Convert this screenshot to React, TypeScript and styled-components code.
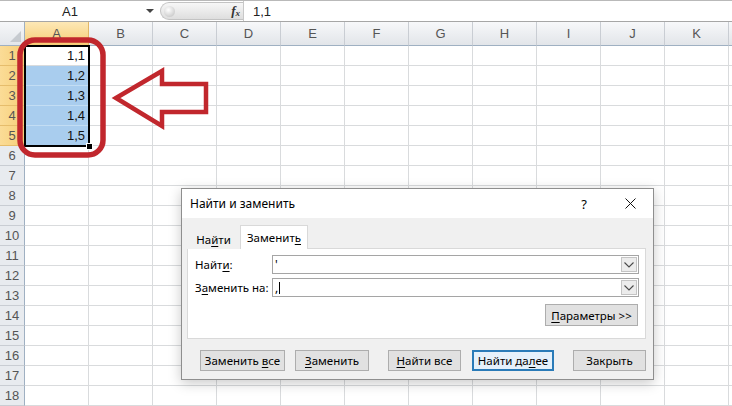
import styled, { createGlobalStyle } from "styled-components";

const GlobalStyle = createGlobalStyle`
  *, *::before, *::after { box-sizing: border-box; }
  html, body { margin: 0; padding: 0; background: #fff; overflow: hidden; }
  body { font-family: "Liberation Sans", Arial, sans-serif; }
`;

const COLUMNS = ["A", "B", "C", "D", "E", "F", "G", "H", "I", "J", "K", ""];
const ROWS = Array.from({ length: 18 }, (_, i) => i + 1);
const VALUES: Record<number, string> = { 1: "1,1", 2: "1,2", 3: "1,3", 4: "1,4", 5: "1,5" };

const Stage = styled.div`
  position: relative;
  width: 732px;
  height: 406px;
  overflow: hidden;
`;

/* formula bar */
const FormulaBar = styled.div`
  display: flex;
  height: 22px;
  border-top: 1px solid #b9b9b9;
  border-bottom: 1px solid #a6a6a6;
  background: #fff;
`;

const NameBox = styled.div`
  width: 140px;
  display: flex;
  align-items: center;
  justify-content: center;
  font-size: 13px;
  color: #222;
`;

const Caret = styled.div`
  width: 20px;
  display: flex;
  align-items: center;
  justify-content: center;
  &::after {
    content: "";
    border-left: 4px solid transparent;
    border-right: 4px solid transparent;
    border-top: 4px solid #444;
  }
`;

const Pill = styled.div`
  width: 83px;
  margin: 1px 0;
  border: 1px solid #c3c3c3;
  border-right: none;
  border-radius: 10px 0 0 10px;
  background: linear-gradient(#f7f7f7, #dedede);
  display: flex;
  align-items: center;
  justify-content: space-between;
  padding: 0 3px 0 3px;
`;

const Grip = styled.div`
  width: 11px;
  height: 11px;
  border-radius: 50%;
  background: radial-gradient(circle at 40% 35%, #fff, #d0d0d0 70%);
`;

const Fx = styled.span`
  font-family: "Liberation Serif", "Times New Roman", serif;
  font-style: italic;
  font-weight: bold;
  font-size: 13px;
  color: #333;
  sub {
    font-size: 9px;
    vertical-align: -1px;
  }
`;

const FormulaInput = styled.div`
  flex: 1;
  border-left: 1px solid #c8c8c8;
  display: flex;
  align-items: center;
  padding-left: 9px;
  font-size: 13px;
  color: #222;
`;

/* sheet */
const Sheet = styled.div`
  display: grid;
  grid-template-columns: 25px repeat(11, 64px) 1fr;
  grid-template-rows: 24px repeat(18, 20px);
`;

const Corner = styled.div`
  position: relative;
  background: linear-gradient(#f6f7f9, #e3e6ea);
  border-right: 1px solid #9fb0c2;
  border-bottom: 1px solid #9fb0c2;
  &::after {
    content: "";
    position: absolute;
    right: 3px;
    bottom: 3px;
    border-left: 11px solid transparent;
    border-bottom: 11px solid #c6cacf;
  }
`;

const ColHead = styled.div<{ $active?: boolean }>`
  display: flex;
  align-items: center;
  justify-content: center;
  font-size: 13px;
  color: #555;
  background: ${(p) =>
    p.$active ? "linear-gradient(#fde8b6, #f6cd76)" : "linear-gradient(#f7f8fa, #e2e5e9)"};
  border-right: 1px solid ${(p) => (p.$active ? "#e2b767" : "#c9cdd3")};
  border-bottom: 1px solid ${(p) => (p.$active ? "#e1a93d" : "#9fb0c2")};
`;

const RowHead = styled.div<{ $active?: boolean }>`
  display: flex;
  align-items: center;
  justify-content: center;
  font-size: 13px;
  color: #555;
  background: ${(p) => (p.$active ? "linear-gradient(90deg, #fbdc97, #f6cf78)" : "#e8ebef")};
  border-right: 1px solid ${(p) => (p.$active ? "#e1a93d" : "#9fb0c2")};
  border-bottom: 1px solid ${(p) => (p.$active ? "#e6bd6c" : "#c9cdd3")};
`;

const Cell = styled.div<{ $selected?: boolean }>`
  display: flex;
  align-items: center;
  justify-content: flex-end;
  padding-right: 3px;
  font-size: 13px;
  color: #111;
  background: ${(p) => (p.$selected ? "#a9cdee" : "#fff")};
  border-right: 1px solid #d9dbdd;
  border-bottom: 1px solid ${(p) => (p.$selected ? "#c3ddf3" : "#d9dbdd")};
`;

const Selection = styled.div`
  position: absolute;
  left: 24px;
  top: 45px;
  width: 66px;
  height: 102px;
  border: 2px solid #000;
  pointer-events: none;
`;

const FillHandle = styled.div`
  position: absolute;
  right: -5px;
  bottom: -5px;
  width: 7px;
  height: 7px;
  background: #000;
  border: 1px solid #fff;
`;

const Annotation = styled.svg`
  position: absolute;
  left: 0;
  top: 0;
  pointer-events: none;
`;

/* dialog */
const Dialog = styled.div`
  position: absolute;
  left: 181px;
  top: 188px;
  width: 473px;
  height: 192px;
  border: 1px solid #8e8e8e;
  background: #f0f0f0;
  box-shadow: 0 3px 12px rgba(0, 0, 0, 0.22);
  font-family: "Noto Sans", "Open Sans", sans-serif;
  font-size: 11.5px;
  color: #000;
  display: flex;
  flex-direction: column;
`;

const TitleBar = styled.div`
  height: 29px;
  background: #fff;
  display: flex;
  align-items: center;
  padding-left: 8px;
`;

const Title = styled.div`
  flex: 1;
  font-size: 12px;
`;

const TitleButton = styled.div`
  width: 46px;
  height: 29px;
  display: flex;
  align-items: center;
  justify-content: center;
  font-size: 13px;
`;

const Body = styled.div`
  flex: 1;
  padding: 8px 7px 0 5px;
  display: flex;
  flex-direction: column;
`;

const TabRow = styled.div`
  display: flex;
  align-items: flex-end;
  height: 23px;
  margin-bottom: -1px;
  position: relative;
  z-index: 1;
`;

const Tab = styled.div<{ $active?: boolean; $w: number }>`
  width: ${(p) => p.$w}px;
  height: ${(p) => (p.$active ? 24 : 21)}px;
  display: flex;
  align-items: center;
  justify-content: center;
  background: ${(p) => (p.$active ? "#fff" : "#f0f0f0")};
  border: 1px solid ${(p) => (p.$active ? "#d9d9d9" : "transparent")};
  border-bottom: none;
  padding-top: ${(p) => (p.$active ? 0 : 1)}px;
`;

const Panel = styled.div`
  height: 91px;
  background: #fff;
  border: 1px solid #d9d9d9;
  padding: 6px 6px 0 7px;
`;

const FieldRow = styled.div`
  display: grid;
  grid-template-columns: 77px 1fr;
  align-items: center;
  height: 19px;
  margin-bottom: 4px;
`;

const Combo = styled.div`
  height: 19px;
  display: flex;
  border: 1px solid #a5a5a5;
  background: #fff;
`;

const ComboText = styled.div`
  flex: 1;
  display: flex;
  align-items: center;
  padding-left: 2px;
  font-size: 12px;
`;

const Cursor = styled.span`
  display: inline-block;
  width: 1px;
  height: 12px;
  background: #000;
  margin-left: 1px;
`;

const ComboButton = styled.div`
  width: 16px;
  margin: 1px;
  background: #ececec;
  border: 1px solid #c4c4c4;
  display: flex;
  align-items: center;
  justify-content: center;
`;

const Actions = styled.div<{ $top: number }>`
  display: flex;
  margin-top: ${(p) => p.$top}px;
`;

const ParamsRow = styled.div`
  display: flex;
  justify-content: flex-end;
  margin-top: 7px;
  padding-right: 1px;
`;

const Button = styled.div<{ $w: number; $gap?: number; $default?: boolean; $h?: number }>`
  width: ${(p) => p.$w}px;
  height: ${(p) => p.$h ?? 21}px;
  margin-left: ${(p) => p.$gap ?? 0}px;
  display: flex;
  align-items: center;
  justify-content: center;
  background: ${(p) => (p.$default ? "#e5f1fb" : "#e1e1e1")};
  border: ${(p) => (p.$default ? "2px solid #2a7bb8" : "1px solid #adadad")};
  white-space: pre;
`;

const U = styled.span`
  text-decoration: underline;
  text-underline-offset: 2px;
  text-decoration-thickness: 1px;
`;

const Chevron = () => (
  <svg width="10" height="6" viewBox="0 0 10 6">
    <path d="M0.5 0.5 L5 5 L9.5 0.5" fill="none" stroke="#4a4a4a" strokeWidth="1.1" />
  </svg>
);

const CloseIcon = () => (
  <svg width="11" height="11" viewBox="0 0 11 11">
    <path d="M0.5 0.5 L10.5 10.5 M10.5 0.5 L0.5 10.5" stroke="#111" strokeWidth="1" />
  </svg>
);

export default function App() {
  return (
    <Stage>
      <GlobalStyle />
      <FormulaBar>
        <NameBox>A1</NameBox>
        <Caret />
        <Pill>
          <Grip />
          <Fx>
            f<sub>x</sub>
          </Fx>
        </Pill>
        <FormulaInput>1,1</FormulaInput>
      </FormulaBar>

      <Sheet>
        <Corner />
        {COLUMNS.map((c, i) => (
          <ColHead key={i} $active={c === "A"}>
            {c}
          </ColHead>
        ))}
        {ROWS.map((r) => [
          <RowHead key={`h${r}`} $active={r <= 5}>
            {r}
          </RowHead>,
          ...COLUMNS.map((c, i) => (
            <Cell key={`${r}-${i}`} $selected={c === "A" && r >= 2 && r <= 5}>
              {c === "A" ? VALUES[r] : null}
            </Cell>
          )),
        ])}
      </Sheet>

      <Selection>
        <FillHandle />
      </Selection>

      <Annotation width="732" height="406" viewBox="0 0 732 406">
        <rect x="20" y="40" width="83" height="115" rx="15" fill="none" stroke="#c1272d" strokeWidth="5.5" />
        <polygon
          points="116,98 162,71 162,84 206,84 206,112 162,112 162,126"
          fill="none"
          stroke="#c1272d"
          strokeWidth="4.5"
        />
      </Annotation>

      <Dialog>
        <TitleBar>
          <Title>Найти и заменить</Title>
          <TitleButton>?</TitleButton>
          <TitleButton>
            <CloseIcon />
          </TitleButton>
        </TitleBar>
        <Body>
          <TabRow>
            <Tab $w={53}>
              На<U>й</U>ти
            </Tab>
            <Tab $w={68} $active>
              Заменит<U>ь</U>
            </Tab>
          </TabRow>
          <Panel>
            <FieldRow>
              <span>
                Найт<U>и</U>:
              </span>
              <Combo>
                <ComboText>'</ComboText>
                <ComboButton>
                  <Chevron />
                </ComboButton>
              </Combo>
            </FieldRow>
            <FieldRow>
              <span>
                З<U>а</U>менить на:
              </span>
              <Combo>
                <ComboText>
                  ,<Cursor />
                </ComboText>
                <ComboButton>
                  <Chevron />
                </ComboButton>
              </Combo>
            </FieldRow>
            <ParamsRow>
              <Button $w={93} $h={22}>
                <U>П</U>араметры &gt;&gt;
              </Button>
            </ParamsRow>
          </Panel>
          <Actions $top={11}>
            <Button $w={85} $gap={13}>
              {"Заменить "}
              <U>в</U>се
            </Button>
            <Button $w={74} $gap={10}>
              <U>З</U>аменить
            </Button>
            <Button $w={73} $gap={19}>
              <U>Н</U>айти все
            </Button>
            <Button $w={82} $gap={11} $default>
              Найти да<U>л</U>ее
            </Button>
            <Button $w={73} $gap={19}>
              Закрыть
            </Button>
          </Actions>
        </Body>
      </Dialog>
    </Stage>
  );
}
